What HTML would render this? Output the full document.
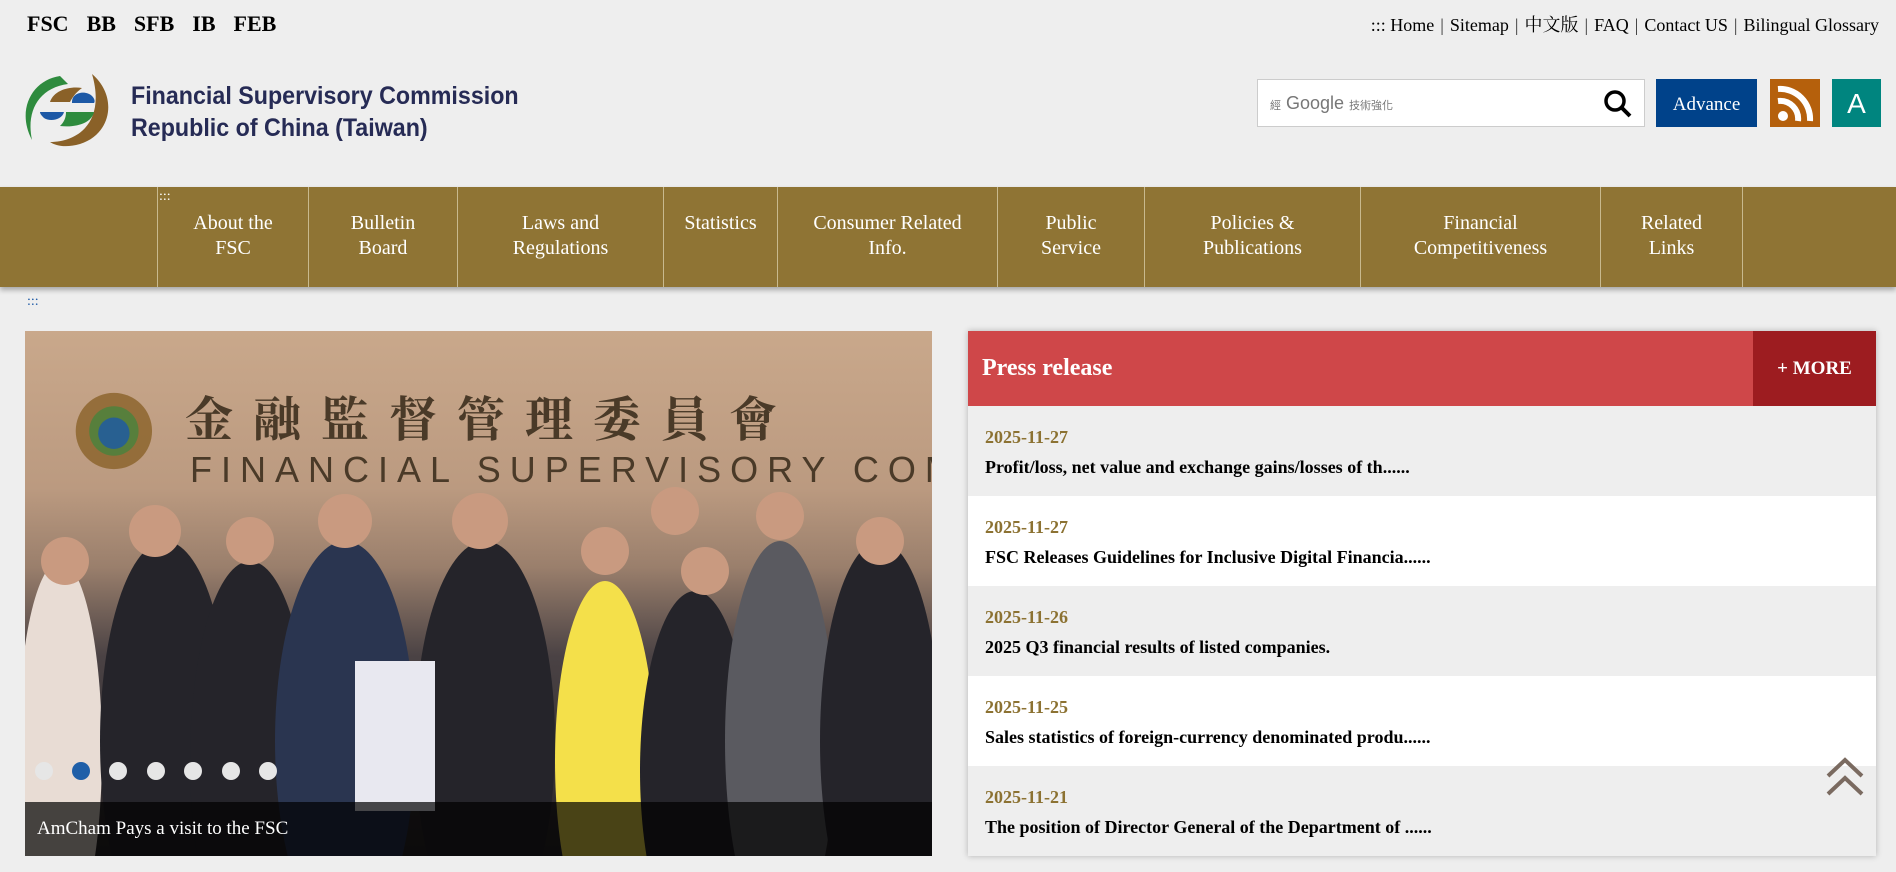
<!DOCTYPE html>
<html><head><meta charset="utf-8"><style>
*{margin:0;padding:0;box-sizing:border-box}
html,body{width:1896px;height:872px;overflow:hidden}
body{background:#eeeeee;font-family:"Liberation Serif","Noto Serif CJK SC",serif;position:relative}
.abs{position:absolute}
.top a{font-weight:bold;font-size:22px;color:#000;margin-right:18px;text-decoration:none}
.rl{font-size:18px;color:#000;white-space:nowrap}
.rl span{color:#333;margin:0 6px}
.nav{left:0;top:187px;width:1896px;height:100px;background:#8f7434;box-shadow:0 3px 5px rgba(0,0,0,.3)}
.nav div{position:absolute;top:0;height:100px;border-left:1px solid #c8b98e;color:#fff;font-size:20px;text-align:center;line-height:25px;padding-top:24px}
.pr{left:968px;top:331px;width:908px;height:525px;box-shadow:0 0 6px rgba(0,0,0,.25);background:#fff;overflow:hidden}
.it{height:90px;padding:20px 17px;}
.it .d{color:#8c7232;font-weight:bold;font-size:18px;line-height:22px}
.it .t{color:#000;font-weight:bold;font-size:18px;line-height:22px;margin-top:8px}
.dot{position:absolute;top:762px;width:18px;height:18px;border-radius:50%;background:#e6e6e6}
</style></head><body>
<div class="abs top" style="left:27px;top:11px">
<a>FSC</a><a>BB</a><a>SFB</a><a>IB</a><a>FEB</a></div>
<div class="abs rl" style="right:17px;top:11px">::: Home<span>|</span>Sitemap<span>|</span>中文版<span>|</span>FAQ<span>|</span>Contact US<span>|</span>Bilingual Glossary</div>
<svg class="abs" style="left:20px;top:72px" width="98" height="76" viewBox="0 0 98 76">
<path d="M40 4 C12 8 -4 38 12 68 C6 40 18 16 48 12 Z" fill="#2e8b3e"/>
<path d="M72 2 C98 24 92 62 60 72 C46 76 36 74 30 70 C58 70 86 50 72 2 Z" fill="#8a6128"/>
<path d="M30 30 C34 18 50 14 62 16 C56 20 52 26 50 30 Z" fill="#8a6128"/>
<path d="M52 30 C52 20 66 18 72 24 C75 27 75 30 74 31 L52 31 Z" fill="#1d59a6"/>
<path d="M20 40 L44 40 C42 48 30 50 24 46 C22 44 20 42 20 40Z" fill="#1d59a6"/>
<path d="M46 40 L74 40 C72 50 58 56 40 54 C44 50 46 46 46 40Z" fill="#2e8b3e"/>
</svg>
<div class="abs" style="left:131px;top:80px;font-family:'Liberation Sans',sans-serif;font-weight:bold;font-size:25px;line-height:32px;color:#262b55;transform:scaleX(.93);transform-origin:left;white-space:nowrap">Financial Supervisory Commission<br>Republic of China (Taiwan)</div>
<div class="abs" style="left:1257px;top:79px;width:388px;height:48px;background:#fff;border:1px solid #ccc">
<span class="abs" style="left:12px;top:13px;font-family:'Liberation Sans','Noto Sans CJK TC',sans-serif;color:#777;font-size:18px;white-space:nowrap">
<span style="font-size:11px">經</span> Google <span style="font-size:11px">技術強化</span></span>
<svg class="abs" style="left:345px;top:9px" width="30" height="30" viewBox="0 0 30 30"><circle cx="12" cy="12" r="9" fill="none" stroke="#000" stroke-width="3.5"/><path d="M18 18 L27 27" stroke="#000" stroke-width="4"/></svg></div>
<div class="abs" style="left:1656px;top:79px;width:101px;height:48px;background:#00428a;color:#fff;font-size:19px;text-align:center;line-height:52px">Advance</div>
<div class="abs" style="left:1770px;top:79px;width:50px;height:48px;background:#b5600c"><svg width="50" height="48" viewBox="0 0 50 48"><circle cx="13" cy="37" r="5" fill="#fff"/><path d="M8 22 A18 18 0 0 1 28 42" stroke="#fff" stroke-width="6" fill="none"/><path d="M8 10 A30 30 0 0 1 40 42" stroke="#fff" stroke-width="6" fill="none"/></svg></div>
<div class="abs" style="left:1832px;top:79px;width:49px;height:48px;background:#00857f;color:#fff;font-family:'Liberation Sans',sans-serif;font-size:28px;text-align:center;line-height:50px">A</div>
<div class="abs nav">
<span class="abs" style="left:159px;top:2px;color:#fff;font-size:14px">:::</span>
<div style="left:157px;width:151px">About the<br>FSC</div>
<div style="left:308px;width:149px">Bulletin<br>Board</div>
<div style="left:457px;width:206px">Laws and<br>Regulations</div>
<div style="left:663px;width:114px">Statistics</div>
<div style="left:777px;width:220px">Consumer Related<br>Info.</div>
<div style="left:997px;width:147px">Public<br>Service</div>
<div style="left:1144px;width:216px">Policies &amp;<br>Publications</div>
<div style="left:1360px;width:240px">Financial<br>Competitiveness</div>
<div style="left:1600px;width:142px">Related<br>Links</div>
<div style="left:1742px;width:1px;padding:0"></div>
</div>
<div class="abs" style="left:27px;top:294px;color:#1d59a6;font-size:14px">:::</div>
<div class="abs" style="left:25px;top:331px;width:907px;height:525px;overflow:hidden;background:linear-gradient(180deg,#c9a88b 0%,#bb9a80 30%,#9a7f6c 45%,#4a4244 62%,#2a2628 100%)">
<div class="abs" style="left:160px;top:50px;white-space:nowrap;color:#4a3a28;font-family:'Noto Serif CJK TC',serif;font-size:48px;letter-spacing:20px;font-weight:bold">金融監督管理委員會</div>
<div class="abs" style="left:165px;top:118px;white-space:nowrap;color:#4a3a28;font-family:'Liberation Sans',sans-serif;font-size:36px;letter-spacing:9px">FINANCIAL SUPERVISORY COMMISSION</div>
<svg class="abs" style="left:35px;top:45px" width="110" height="110" viewBox="0 0 98 76"><circle cx="48" cy="38" r="34" fill="#8a6128" opacity=".8"/><circle cx="48" cy="38" r="22" fill="#2e8b3e" opacity=".6"/><circle cx="48" cy="40" r="14" fill="#1d59a6" opacity=".8"/></svg>
<svg class="abs" style="left:0;top:140px" width="907" height="385"><g fill="#25242a">
<ellipse cx="35" cy="280" rx="42" ry="190" fill="#e8dcd4"/><ellipse cx="140" cy="270" rx="65" ry="200"/><ellipse cx="225" cy="290" rx="60" ry="200"/><ellipse cx="320" cy="270" rx="70" ry="200" fill="#2a3550"/><ellipse cx="460" cy="270" rx="70" ry="200"/><ellipse cx="580" cy="290" rx="50" ry="180" fill="#f4e04a"/><ellipse cx="670" cy="300" rx="55" ry="180"/><ellipse cx="755" cy="270" rx="55" ry="200" fill="#5a5a60"/><ellipse cx="855" cy="270" rx="60" ry="200"/>
<circle cx="40" cy="90" r="24" fill="#c99a80"/><circle cx="130" cy="60" r="26" fill="#c99a80"/><circle cx="225" cy="70" r="24" fill="#c99a80"/><circle cx="320" cy="50" r="27" fill="#c99a80"/><circle cx="455" cy="50" r="28" fill="#c99a80"/><circle cx="580" cy="80" r="24" fill="#c99a80"/><circle cx="650" cy="40" r="24" fill="#c99a80"/><circle cx="680" cy="100" r="24" fill="#c99a80"/><circle cx="755" cy="45" r="24" fill="#c99a80"/><circle cx="855" cy="70" r="24" fill="#c99a80"/>
<rect x="330" y="190" width="80" height="150" fill="#e8e8f0"/></g></svg>
<div class="abs" style="left:0;top:471px;width:907px;height:54px;background:rgba(0,0,0,.7);color:#fff;font-size:19px;padding:16px 12px">AmCham Pays a visit to the FSC</div>
</div>
<div class="dot" style="left:35px"></div><div class="dot" style="left:72px;background:#1f5fa8"></div><div class="dot" style="left:109px"></div><div class="dot" style="left:147px"></div><div class="dot" style="left:184px"></div><div class="dot" style="left:222px"></div><div class="dot" style="left:259px"></div>
<div class="abs pr">
<div style="height:75px;background:#cf4749;position:relative"><span class="abs" style="left:14px;top:24px;color:#fff;font-weight:bold;font-size:24px">Press release</span>
<div class="abs" style="right:0;top:0;width:123px;height:75px;background:#9d1c20;color:#fff;font-weight:bold;font-size:19px;text-align:center;line-height:75px">+ MORE</div></div>
<div class="it" style="background:#eee"><div class="d">2025-11-27</div><div class="t">Profit/loss, net value and exchange gains/losses of th......</div></div>
<div class="it"><div class="d">2025-11-27</div><div class="t">FSC Releases Guidelines for Inclusive Digital Financia......</div></div>
<div class="it" style="background:#eee"><div class="d">2025-11-26</div><div class="t">2025 Q3 financial results of listed companies.</div></div>
<div class="it"><div class="d">2025-11-25</div><div class="t">Sales statistics of foreign-currency denominated produ......</div></div>
<div class="it" style="background:#eee"><div class="d">2025-11-21</div><div class="t">The position of Director General of the Department of ......</div></div>
</div>
<svg class="abs" style="left:1825px;top:756px" width="40" height="42" viewBox="0 0 40 42"><path d="M3 20 L20 4 L37 20 M3 38 L20 22 L37 38" stroke="#7a6a60" stroke-width="4" fill="none"/></svg>
</body></html>
